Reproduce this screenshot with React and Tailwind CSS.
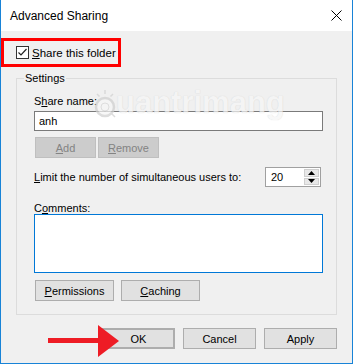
import React from 'react';

const font = { fontFamily: '"Liberation Sans", Arial, sans-serif' };

const Btn = ({ children, className = '', disabled }) => (
    <button
        className={`h-[21px] whitespace-nowrap text-[11px] leading-[16px] border ${
            disabled
                ? 'bg-[#cccccc] border-[#bfbfbf] text-[#838383]'
                : 'bg-[#e1e1e1] border-[#adadad] text-black'
        } ${className}`}
    >
        {children}
    </button>
);

const Spinner = () => (
    <div className="flex h-[20px] w-[56px] border border-[#a0a0a0] bg-white">
        <div className="flex-1 pl-[5px] text-[11px] leading-[18px]">20</div>
        <div className="flex w-[17px] flex-col gap-[1px] p-[1px]">
            <div className="flex flex-1 items-center justify-center border border-[#cfcfcf] bg-[#e8e8e8]">
                <svg width="7" height="4" viewBox="0 0 7 4"><path d="M3.5 0 L7 4 L0 4 Z" fill="#000" /></svg>
            </div>
            <div className="flex flex-1 items-center justify-center border border-[#cfcfcf] bg-[#e8e8e8]">
                <svg width="7" height="4" viewBox="0 0 7 4"><path d="M0 0 L7 0 L3.5 4 Z" fill="#000" /></svg>
            </div>
        </div>
    </div>
);

const App = () => {
    return (
        <div
            className="relative flex h-[364px] w-[353px] flex-col border-x border-b border-[#1883d7] bg-[#f0f0f0] text-black"
            style={font}
        >
            {/* title bar */}
            <div className="flex h-[31px] items-center justify-between bg-white pl-[9px] pr-[10px]">
                <span className="text-[12px] leading-[16px]">Advanced Sharing</span>
                <svg width="11" height="11" viewBox="0 0 11 11">
                    <path d="M0.5 0.5 L10.5 10.5 M10.5 0.5 L0.5 10.5" stroke="#000" strokeWidth="1" />
                </svg>
            </div>

            <div className="flex flex-col pt-[7px]">
                {/* share checkbox, boxed in red */}
                <div className="flex h-[29px] w-[120px] items-center whitespace-nowrap border-[3px] border-[#ff0000] pl-[12px]">
                    <div className="flex h-[13px] w-[13px] items-center justify-center border border-[#333333] bg-white">
                        <svg width="11" height="11" viewBox="0 0 11 11">
                            <path d="M1.5 5.5 L4 8 L9.5 2" fill="none" stroke="#222" strokeWidth="1.2" />
                        </svg>
                    </div>
                    <span className="ml-[3px] text-[11.5px] leading-[16px]">
                        <u>S</u>hare this folder
                    </span>
                </div>

                {/* settings group */}
                <div className="relative ml-[15px] mt-[11px] flex w-[321px] flex-col border border-[#dcdcdc] pb-[13px] pl-[17px] pr-[13px] pt-[14px] text-[11px]">
                    <span className="absolute -top-[9px] left-[7px] bg-[#f0f0f0] px-[1px] leading-[16px]">
                        Settings
                    </span>
                    <span className="leading-[16px]">
                        S<u>h</u>are name:
                    </span>
                    <div className="mt-[2px] flex h-[20px] items-center border border-[#7a7a7a] bg-white pl-[4px]">
                        anh
                    </div>
                    <div className="ml-[1px] mt-[6px] flex gap-[2px]">
                        <Btn disabled className="w-[61px]"><u>A</u>dd</Btn>
                        <Btn disabled className="w-[61px]"><u>R</u>emove</Btn>
                    </div>
                    <div className="mt-[9px] flex items-start justify-between pr-[2px]">
                        <span className="whitespace-nowrap pt-[2px] leading-[16px]">
                            <u>L</u>imit the number of simultaneous users to:
                        </span>
                        <Spinner />
                    </div>
                    <span className="mt-[14px] h-[13px] leading-[14px]">
                        C<u>o</u>mments:
                    </span>
                    <div className="h-[59px] border border-[#0078d7] bg-white" />
                    <div className="ml-[1px] mt-[7px] flex gap-[7px]">
                        <Btn className="w-[79px]"><u>P</u>ermissions</Btn>
                        <Btn className="w-[79px]"><u>C</u>aching</Btn>
                    </div>
                </div>

                {/* dialog buttons */}
                <div className="mt-[13px] flex justify-end gap-[8px] pr-[15px]">
                    <Btn className="w-[73px] border-2 border-[#0078d7]">OK</Btn>
                    <Btn className="w-[73px]">Cancel</Btn>
                    <Btn className="w-[73px]">Apply</Btn>
                </div>
            </div>

            {/* watermark */}
            <div className="pointer-events-none absolute left-[93px] top-[88px] flex items-end opacity-70">
                <svg width="22" height="30" viewBox="0 0 22 30">
                    <circle cx="11" cy="19" r="9" fill="#f6f6f6" stroke="#cfcfcf" strokeWidth="2.5" />
                    <circle cx="11" cy="19" r="4" fill="none" stroke="#d6d6d6" strokeWidth="1" />
                    <path d="M11 2 V6 M3 6 L5.5 8.5 M19 6 L16.5 8.5 M17 25 L21 29" stroke="#d0d0d0" strokeWidth="1.5" />
                </svg>
                <span className="text-[31px] font-bold leading-[30px] text-[#f6f6f6] [text-shadow:0_0_1px_#c8c8c8]">
                    uantrimang
                </span>
            </div>

            {/* red arrow */}
            <svg className="pointer-events-none absolute left-[47px] top-[324px]" width="72" height="34" viewBox="0 0 72 34">
                <path d="M0 14 L50 14 L50 1 L71 17 L50 33 L50 19 L0 19 Z" fill="#ee1c25" />
            </svg>
        </div>
    );
};

export default App;
